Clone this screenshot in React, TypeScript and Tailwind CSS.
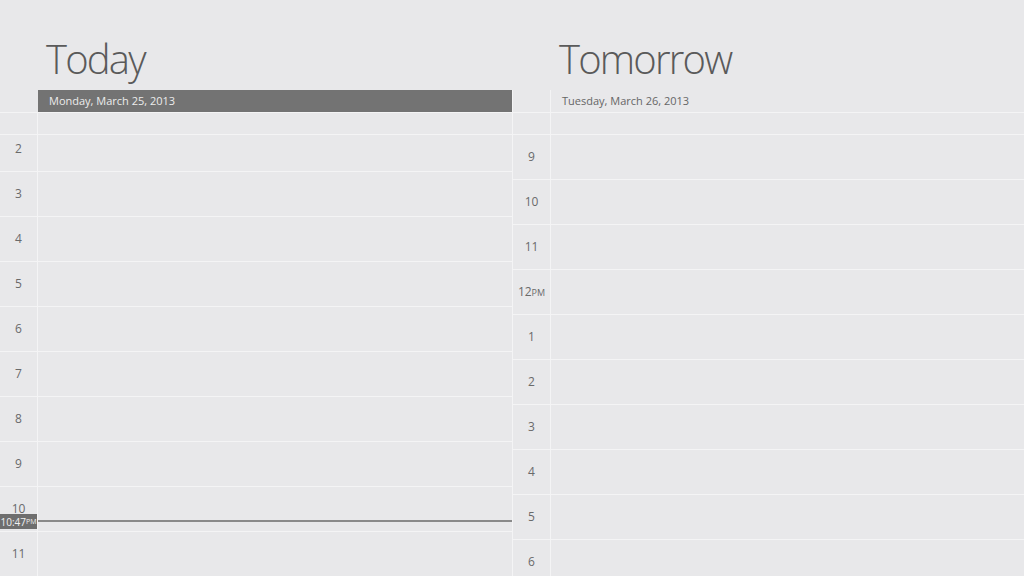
import React from "react";

const leftHours = ["2", "3", "4", "5", "6", "7", "8", "9", "10", "11"];
const rightHours = ["9", "10", "11", "12PM", "1", "2", "3", "4", "5", "6"];

function HourLabel({ label }: { label: string }) {
  const m = label.match(/^(\d+)(AM|PM)?$/);
  const num = m ? m[1] : label;
  const suffix = m && m[2] ? m[2] : "";
  return (
    <span className="text-[12px] text-[#6a6a6a]">
      {num}
      {suffix && <span className="text-[9px]">{suffix}</span>}
    </span>
  );
}

function HourRows({ hours }: { hours: string[] }) {
  return (
    <>
      {hours.map((h) => (
        <div key={h} className="flex h-[45px] border-b border-[#f4f4f5]">
          <div className="flex w-[38px] shrink-0 items-center justify-center border-r border-[#f4f4f5]">
            <HourLabel label={h} />
          </div>
          <div className="flex-1" />
        </div>
      ))}
    </>
  );
}

export default function App() {
  return (
    <div
      className="flex h-[576px] w-[1024px] overflow-hidden bg-[#e8e8ea]"
      style={{ fontFamily: '"Open Sans", "Noto Sans", sans-serif' }}
    >
      {/* Today column */}
      <div className="relative flex w-[512px] shrink-0 flex-col">
        <div className="h-[90px] shrink-0 pl-[46px] pt-[36px]">
          <h1 className="text-[40px] leading-[46px] font-light tracking-[-1.8px] text-[#5a5a5a]">Today</h1>
        </div>
        <div className="flex h-[22px] shrink-0">
          <div className="w-[38px] shrink-0" />
          <div className="flex flex-1 items-center bg-[#737373] pl-[11px] text-[11px] text-[#ececec]">
            Monday, March 25, 2013
          </div>
        </div>
        <div className="flex h-[23px] shrink-0 border-y border-[#f4f4f5]">
          <div className="w-[38px] shrink-0 border-r border-[#f4f4f5]" />
          <div className="flex-1" />
        </div>
        <div className="relative flex-1 overflow-hidden">
          <div className="-mt-[8px]">
            <HourRows hours={leftHours} />
          </div>
          {/* current time indicator */}
          <div className="absolute left-[38px] right-0 top-[385px] h-[2px] bg-[#8a8a8a]" />
          <div className="absolute left-0 top-[379px] flex h-[15px] w-[37px] items-center justify-center bg-[#6e6e6e] text-[10px] leading-none text-[#f0f0f0]">
            10:47<span className="text-[7px]">PM</span>
          </div>
        </div>
      </div>

      {/* Tomorrow column */}
      <div className="flex flex-1 flex-col">
        <div className="h-[90px] shrink-0 pl-[47px] pt-[36px]">
          <h1 className="text-[40px] leading-[46px] font-light tracking-[-1.8px] text-[#5a5a5a]">Tomorrow</h1>
        </div>
        <div className="flex flex-1 flex-col border-l border-[#f4f4f5]">
          <div className="flex h-[22px] shrink-0">
            <div className="w-[38px] shrink-0 border-r border-[#f4f4f5]" />
            <div className="flex flex-1 items-center pl-[11px] text-[11px] text-[#666]">
              Tuesday, March 26, 2013
            </div>
          </div>
          <div className="flex h-[23px] shrink-0 border-y border-[#f4f4f5]">
            <div className="w-[38px] shrink-0 border-r border-[#f4f4f5]" />
            <div className="flex-1" />
          </div>
          <div className="flex-1 overflow-hidden">
            <HourRows hours={rightHours} />
          </div>
        </div>
      </div>
    </div>
  );
}
